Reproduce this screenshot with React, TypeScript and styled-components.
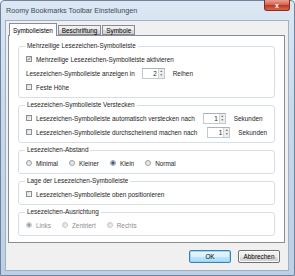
import React from "react";
import styled, { createGlobalStyle } from "styled-components";

const GlobalStyle = createGlobalStyle`
  html, body {
    margin: 0;
    padding: 0;
    background: #ffffff;
  }
  body {
    font-family: "Liberation Sans", Arial, sans-serif;
    font-size: 6.4px;
    color: #1e1e1e;
  }
`;

const Window = styled.div`
  width: 295px;
  height: 276px;
  box-sizing: border-box;
  display: flex;
  flex-direction: column;
  border: 1px solid #6f849c;
  border-radius: 4px 4px 0 0;
  background: linear-gradient(180deg, #dce7f3 0%, #c9d9ea 40%, #bccfe4 100%);
  padding: 0 5px 4px 4px;
`;

const TitleBar = styled.div`
  height: 19px;
  display: flex;
  align-items: flex-start;
  justify-content: space-between;
`;

const Title = styled.span`
  font-size: 7.2px;
  color: #3a4a5c;
  margin-top: 5px;
  margin-left: 1px;
`;

const CloseButton = styled.div`
  width: 26px;
  height: 11px;
  margin-top: -1px;
  margin-right: -1px;
  border: 1px solid #7d2e25;
  border-top: none;
  border-radius: 0 0 3px 3px;
  background: linear-gradient(180deg, #e8a195 0%, #d5664f 45%, #c03a1f 55%, #d86a4d 100%);
  display: flex;
  align-items: center;
  justify-content: center;
  color: #ffffff;
  font-size: 7px;
  font-weight: bold;
  box-sizing: border-box;
`;

const Client = styled.div`
  flex: 1;
  background: #f0f0f0;
  border: 1px solid #9fb1c6;
  display: flex;
  flex-direction: column;
  padding: 1px 3px 0 2px;
`;

const TabStrip = styled.div`
  display: flex;
  align-items: flex-end;
  height: 13px;
  padding-left: 1px;
  position: relative;
  z-index: 1;
`;

const Tab = styled.div<{ $active?: boolean }>`
  height: ${(p) => (p.$active ? "13px" : "10px")};
  box-sizing: border-box;
  padding: 0 3px;
  margin-right: 1px;
  display: flex;
  align-items: center;
  border: 1px solid #898c95;
  border-bottom: ${(p) => (p.$active ? "none" : "1px solid #898c95")};
  background: ${(p) =>
    p.$active ? "#ffffff" : "linear-gradient(180deg, #f2f2f2 0%, #ebebeb 50%, #dddddd 51%, #cfcfcf 100%)"};
  color: #000000;
  margin-bottom: ${(p) => (p.$active ? "-1px" : "0")};
`;

const Panel = styled.div`
  height: 208px;
  box-sizing: border-box;
  background: #ffffff;
  border: 1px solid #898c95;
  padding: 6px 9px 0 9px;
  display: flex;
  flex-direction: column;
  gap: 3px;
`;

const Group = styled.fieldset`
  margin: 0;
  border: 1px solid #d5dfe5;
  border-radius: 3px;
  padding: 2px 6px 3px 7px;
  min-width: 0;
`;

const Legend = styled.legend`
  padding: 0 2px;
  margin-left: -1px;
  line-height: 8px;
  color: #1e1e1e;
`;

const Row = styled.div<{ $gap?: number }>`
  height: 14px;
  display: flex;
  align-items: center;
  gap: ${(p) => p.$gap ?? 0}px;
`;

const Check = styled.span`
  width: 6px;
  height: 6px;
  box-sizing: border-box;
  border: 1px solid #8f8f8f;
  background: linear-gradient(135deg, #dcdcdc, #f8f8f8);
  margin-right: 4px;
  display: inline-flex;
  align-items: center;
  justify-content: center;
  flex-shrink: 0;
`;

const Tick = () => (
  <svg width="6" height="6" viewBox="0 0 6 6" style={{ marginTop: -1 }}>
    <path d="M1 3 L2.4 4.6 L5.2 0.8" stroke="#4a5f86" strokeWidth="1.1" fill="none" />
  </svg>
);

const RadioItem = styled.span<{ $disabled?: boolean }>`
  display: inline-flex;
  align-items: center;
  color: ${(p) => (p.$disabled ? "#8e8e8e" : "#1e1e1e")};
`;

const RadioDot = styled.span<{ $checked?: boolean; $disabled?: boolean }>`
  width: 6px;
  height: 6px;
  box-sizing: border-box;
  border-radius: 50%;
  border: 1px solid ${(p) => (p.$disabled ? "#c8c8c8" : "#a0a0a0")};
  background: ${(p) =>
    p.$checked
      ? p.$disabled
        ? "radial-gradient(circle, #9a9a9a 0 1.4px, #eeeeee 1.8px)"
        : "radial-gradient(circle, #2a5a9c 0 1.4px, #e4e4e4 1.8px)"
      : "linear-gradient(135deg, #d8d8d8, #f6f6f6)"};
  margin-right: 4px;
`;

const Spinner = styled.span<{ $left: number }>`
  margin-left: ${(p) => p.$left}px;
  margin-right: 8px;
  width: 23px;
  height: 11px;
  box-sizing: border-box;
  border: 1px solid #c2c8d0;
  border-top-color: #aab2bd;
  background: #ffffff;
  display: flex;
  align-items: stretch;
`;

const SpinValue = styled.span`
  flex: 1;
  text-align: right;
  padding-right: 1px;
  line-height: 9px;
`;

const SpinArrows = styled.span`
  width: 5px;
  display: flex;
  flex-direction: column;
  border-left: 1px solid #d6d6d6;
  background: #eeeeee;
  font-size: 3px;
  color: #555;
  line-height: 4.5px;
  text-align: center;
`;

const Footer = styled.div`
  flex: 1;
  display: flex;
  align-items: center;
  justify-content: flex-end;
  gap: 7px;
  padding-right: 5px;
`;

const Button = styled.div<{ $default?: boolean }>`
  width: 42px;
  height: 13px;
  box-sizing: border-box;
  border: 1px solid ${(p) => (p.$default ? "#3c7fb1" : "#707070")};
  border-radius: 2px;
  background: ${(p) =>
    p.$default
      ? "linear-gradient(180deg, #eaf6fd 0%, #d9f0fc 50%, #bee6fd 51%, #a7d9f5 100%)"
      : "linear-gradient(180deg, #f2f2f2 0%, #ebebeb 50%, #dddddd 51%, #cfcfcf 100%)"};
  box-shadow: ${(p) => (p.$default ? "inset 0 0 0 1px #9fd5f4" : "inset 0 0 0 1px #fafafa")};
  display: flex;
  align-items: center;
  justify-content: center;
  color: #000000;
`;

const Spin = ({ value, left }: { value: string; left: number }) => (
  <Spinner $left={left}>
    <SpinValue>{value}</SpinValue>
    <SpinArrows>
      <span>▲</span>
      <span>▼</span>
    </SpinArrows>
  </Spinner>
);

export default function App() {
  return (
    <>
      <GlobalStyle />
      <Window>
        <TitleBar>
          <Title>Roomy Bookmarks Toolbar Einstellungen</Title>
          <CloseButton>x</CloseButton>
        </TitleBar>
        <Client>
          <TabStrip>
            <Tab $active>Symbolleisten</Tab>
            <Tab>Beschriftung</Tab>
            <Tab>Symbole</Tab>
          </TabStrip>
          <Panel>
            <Group>
              <Legend>Mehrzeilige Lesezeichen-Symbolleiste</Legend>
              <Row>
                <Check>
                  <Tick />
                </Check>
                Mehrzeilige Lesezeichen-Symbolleiste aktivieren
              </Row>
              <Row>
                Lesezeichen-Symbolleiste anzeigen in
                <Spin value="2" left={7} />
                Reihen
              </Row>
              <Row>
                <Check />
                Feste Höhe
              </Row>
            </Group>
            <Group>
              <Legend>Lesezeichen-Symbolleiste Verstecken</Legend>
              <Row>
                <Check />
                Lesezeichen-Symbolleiste automatisch verstecken nach
                <Spin value="1" left={8} />
                Sekunden
              </Row>
              <Row>
                <Check />
                Lesezeichen-Symbolleiste durchscheinend machen nach
                <Spin value="1" left={10} />
                Sekunden
              </Row>
            </Group>
            <Group>
              <Legend>Lesezeichen-Abstand</Legend>
              <Row $gap={11}>
                <RadioItem>
                  <RadioDot />
                  Minimal
                </RadioItem>
                <RadioItem>
                  <RadioDot />
                  Kleiner
                </RadioItem>
                <RadioItem>
                  <RadioDot $checked />
                  Klein
                </RadioItem>
                <RadioItem>
                  <RadioDot />
                  Normal
                </RadioItem>
              </Row>
            </Group>
            <Group>
              <Legend>Lage der Lesezeichen-Symbolleiste</Legend>
              <Row>
                <Check />
                Lesezeichen-Symbolleiste oben positionieren
              </Row>
            </Group>
            <Group>
              <Legend>Lesezeichen-Ausrichtung</Legend>
              <Row $gap={11}>
                <RadioItem $disabled>
                  <RadioDot $checked $disabled />
                  Links
                </RadioItem>
                <RadioItem $disabled>
                  <RadioDot $disabled />
                  Zentriert
                </RadioItem>
                <RadioItem $disabled>
                  <RadioDot $disabled />
                  Rechts
                </RadioItem>
              </Row>
            </Group>
          </Panel>
          <Footer>
            <Button $default>OK</Button>
            <Button>Abbrechen</Button>
          </Footer>
        </Client>
      </Window>
    </>
  );
}
